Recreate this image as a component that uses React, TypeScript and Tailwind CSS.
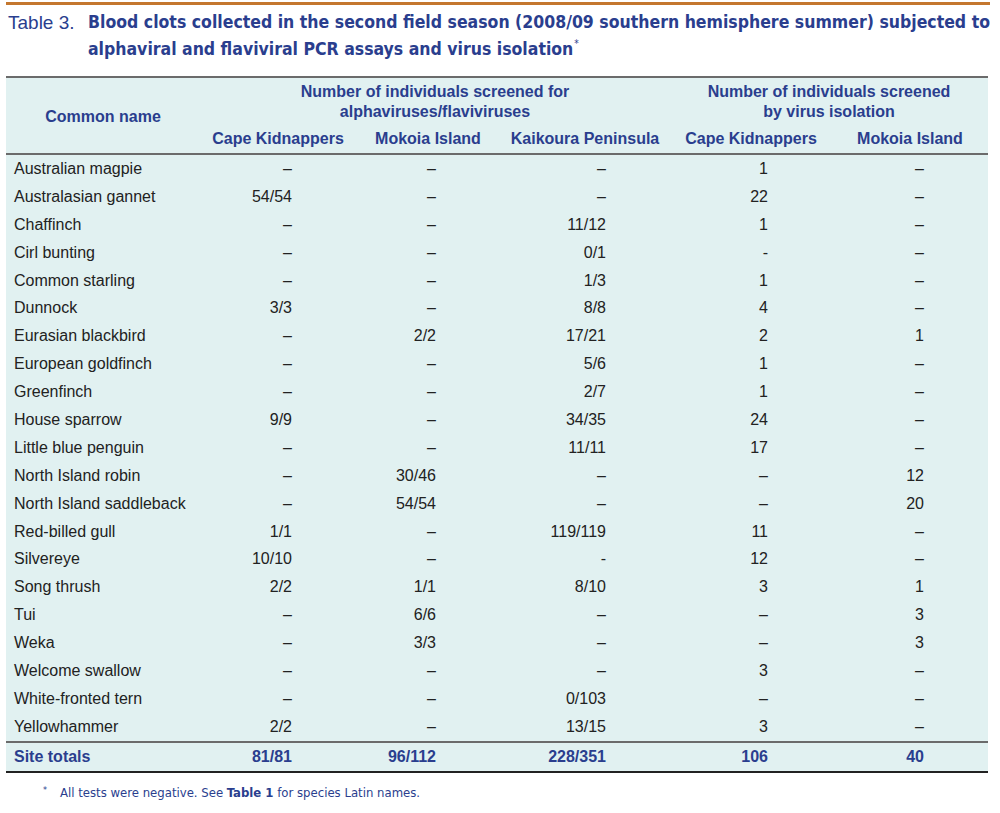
const rows: [string, string, string, string, string, string][] = [
  ["Australian magpie", "–", "–", "–", "1", "–"],
  ["Australasian gannet", "54/54", "–", "–", "22", "–"],
  ["Chaffinch", "–", "–", "11/12", "1", "–"],
  ["Cirl bunting", "–", "–", "0/1", "-", "–"],
  ["Common starling", "–", "–", "1/3", "1", "–"],
  ["Dunnock", "3/3", "–", "8/8", "4", "–"],
  ["Eurasian blackbird", "–", "2/2", "17/21", "2", "1"],
  ["European goldfinch", "–", "–", "5/6", "1", "–"],
  ["Greenfinch", "–", "–", "2/7", "1", "–"],
  ["House sparrow", "9/9", "–", "34/35", "24", "–"],
  ["Little blue penguin", "–", "–", "11/11", "17", "–"],
  ["North Island robin", "–", "30/46", "–", "–", "12"],
  ["North Island saddleback", "–", "54/54", "–", "–", "20"],
  ["Red-billed gull", "1/1", "–", "119/119", "11", "–"],
  ["Silvereye", "10/10", "–", "-", "12", "–"],
  ["Song thrush", "2/2", "1/1", "8/10", "3", "1"],
  ["Tui", "–", "6/6", "–", "–", "3"],
  ["Weka", "–", "3/3", "–", "–", "3"],
  ["Welcome swallow", "–", "–", "–", "3", "–"],
  ["White-fronted tern", "–", "–", "0/103", "–", "–"],
  ["Yellowhammer", "2/2", "–", "13/15", "3", "–"],
];

const totals = ["81/81", "96/112", "228/351", "106", "40"];

const grid = "grid grid-cols-[194px_156px_144px_170px_162px_156px]";
const narrow = { fontFamily: '"DejaVu Sans Condensed", "Liberation Sans", sans-serif' };
const sans = { fontFamily: '"Liberation Sans", Arial, sans-serif' };

export default function App() {
  return (
    <div className="w-[1000px] h-[813px] bg-white relative">
      <div className="pt-[2px] pl-[6px] pr-[10px]">
        <div className="h-[3px] bg-[#c4772e]" />
      </div>

      {/* Caption */}
      <div className="flex pl-[8px] pr-[10px] pt-[4px] text-[#2a3e8e]">
        <div className="w-[80px] shrink-0 text-[19px] leading-[27px] font-light" style={sans}>
          Table 3.
        </div>
        <div className="flex-1 text-[17.5px] leading-[27px] font-bold" style={narrow}>
          <div className="text-justify [text-align-last:justify] whitespace-nowrap">
            Blood clots collected in the second field season (2008/09 southern hemisphere summer) subjected to
          </div>
          <div>
            alphaviral and flaviviral PCR assays and virus isolation
            <span className="text-[10px] font-normal relative -top-[8px] ml-[1px]">*</span>
          </div>
        </div>
      </div>

      {/* Table */}
      <div className="ml-[6px] mt-[11px] w-[982px] bg-[#e1f1f1] border-t-2 border-[#6b6b6b]" style={sans}>
        <div className={`${grid} text-[16px] font-bold text-[#2a3e8e] border-b-2 border-[#6b6b6b]`}>
          <div className="row-span-2 flex items-center justify-center pt-[2px]">Common name</div>
          <div className="col-span-3 text-center leading-[20px] pt-[4px] pb-[4px]">
            Number of individuals screened for
            <br />
            alphaviruses/flaviviruses
          </div>
          <div className="col-span-2 text-center leading-[20px] pt-[4px] pb-[4px]">
            Number of individuals screened
            <br />
            by virus isolation
          </div>
          <div className="text-center leading-[20px] pt-[3px] pb-[4px]">Cape Kidnappers</div>
          <div className="text-center leading-[20px] pt-[3px] pb-[4px]">Mokoia Island</div>
          <div className="text-center leading-[20px] pt-[3px] pb-[4px]">Kaikoura Peninsula</div>
          <div className="text-center leading-[20px] pt-[3px] pb-[4px]">Cape Kidnappers</div>
          <div className="text-center leading-[20px] pt-[3px] pb-[4px]">Mokoia Island</div>
        </div>

        <div className="border-b-2 border-[#6b6b6b]">
          {rows.map((r) => (
            <div key={r[0]} className={`${grid} h-[27.9px] items-center text-[16px] text-[#222]`}>
              <div className="pl-[8px]">{r[0]}</div>
              {r.slice(1).map((v, i) => (
                <div key={i} className="text-right pr-[64px]">
                  {v}
                </div>
              ))}
            </div>
          ))}
        </div>

        <div className={`${grid} h-[30px] items-center text-[16px] font-bold text-[#2a3e8e] border-b-2 border-[#222]`}>
          <div className="pl-[8px]">Site totals</div>
          {totals.map((v, i) => (
            <div key={i} className="text-right pr-[64px]">
              {v}
            </div>
          ))}
        </div>
      </div>

      {/* Footnote */}
      <div className="flex items-start pl-[43px] pt-[10px] text-[13px] text-[#2a3e8e]" style={narrow}>
        <span className="text-[9px] w-[17px] leading-[14px]">*</span>
        <span className="leading-[20px]">
          All tests were negative. See <b>Table 1</b> for species Latin names.
        </span>
      </div>
    </div>
  );
}
